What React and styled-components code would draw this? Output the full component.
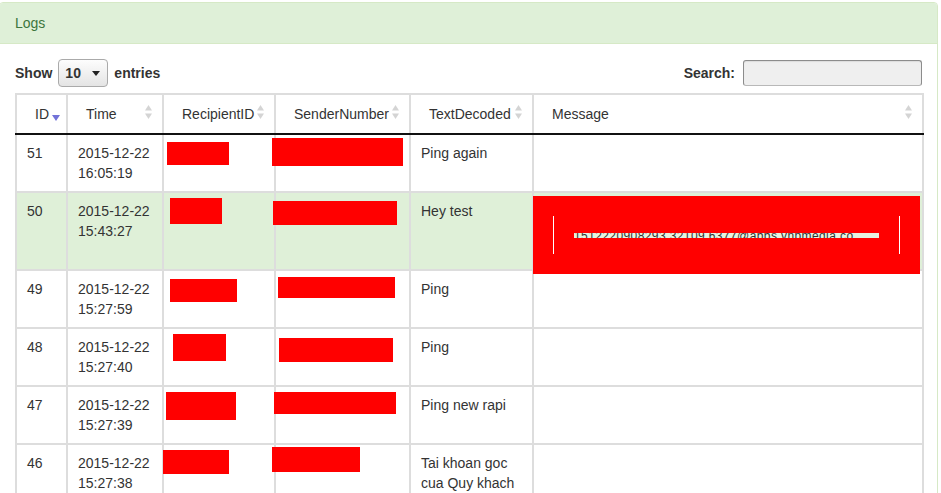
import styled, { createGlobalStyle } from 'styled-components'

const GlobalStyle = createGlobalStyle`
  body {
    margin: 0;
    background: #fff;
    font-family: "Liberation Sans", Helvetica, Arial, sans-serif;
    font-size: 14px;
    line-height: 20px;
    color: #333;
  }
`

const Panel = styled.div`
  margin: 2px 3px 0 -1px;
  border: 1px solid #d6e9c6;
  border-radius: 4px;
  background: #fff;
`
const Heading = styled.div`
  padding: 10px 15px;
  background: #dff0d8;
  color: #3c763d;
  border-bottom: 1px solid #d6e9c6;
  border-radius: 3px 3px 0 0;
`
const Body = styled.div`
  padding: 15px;
`
const Toolbar = styled.div`
  display: flex;
  justify-content: space-between;
  align-items: center;
  height: 28px;
  margin-bottom: 6px;
`
const Label = styled.label`
  display: flex;
  align-items: center;
  gap: 6px;
  font-weight: bold;
`
const FakeSelect = styled.span`
  display: inline-flex;
  align-items: center;
  justify-content: space-between;
  box-sizing: border-box;
  width: 50px;
  height: 28px;
  padding: 0 6px 0 6px;
  border: 1px solid #aaa;
  border-radius: 4px;
  background: linear-gradient(#fdfdfd, #e4e4e4);
  font-weight: bold;
`
const Caret = styled.span`
  width: 0;
  height: 0;
  border-left: 4px solid transparent;
  border-right: 4px solid transparent;
  border-top: 5px solid #222;
  margin-right: 1px;
`
const SearchInput = styled.input`
  box-sizing: border-box;
  width: 179px;
  height: 26px;
  margin-left: 2px;
  border: 1px solid #8c8c8c;
  border-bottom-color: #b8b8b8;
  border-radius: 3px;
  background: #efefef;
  box-shadow: inset 0 1px 1px rgba(0, 0, 0, 0.08);
`

const Table = styled.table`
  width: calc(100% + 2px);
  border-collapse: collapse;
  table-layout: fixed;
`
const Th = styled.th`
  border: 2px solid #ddd;
  border-bottom: 2px solid #111;
  padding: 9px 6px 9px 18px;
  font-weight: normal;
  text-align: left;
  white-space: nowrap;
`
const ThInner = styled.div`
  display: flex;
  align-items: center;
  justify-content: space-between;
`
const Tr = styled.tr`
  background: ${(p) => (p.$success ? '#dff0d8' : 'transparent')};
`
const Td = styled.td`
  border: 2px solid #ddd;
  padding: 8px 10px;
  vertical-align: top;
`
const Redact = styled.div`
  position: relative;
  background: #ff0000;
  width: ${(p) => p.$w}px;
  height: ${(p) => p.$h}px;
  margin-left: ${(p) => p.$x + 1}px;
  margin-top: ${(p) => p.$y}px;
`
const MessageBlock = styled.div`
  position: relative;
  display: flex;
  align-items: center;
  justify-content: space-between;
  height: 78px;
  box-sizing: border-box;
  margin: -5px -8px -13px -11px;
  padding: 20px 20px;
  background: #ff0000;
`
const WhiteLine = styled.div`
  width: 1px;
  height: 38px;
  background: #fff;
`
const Slit = styled.div`
  width: 305px;
  height: 5px;
  overflow: hidden;
  background: #e6f2e0;
  color: #333;
  font-size: 12px;
  line-height: 12px;
  white-space: nowrap;
  span {
    display: block;
    margin-top: -3px;
    letter-spacing: 0.4px;
  }
`

function SortBoth() {
  return (
    <svg width="7" height="14" viewBox="0 0 7 14" style={{ marginRight: 4, marginBottom: 4 }}>
      <polygon points="3.5,0 7,5.5 0,5.5" fill="#d4d4d4" />
      <polygon points="0,8.5 7,8.5 3.5,14" fill="#d4d4d4" />
    </svg>
  )
}

function SortDesc() {
  return (
    <svg width="8" height="6" viewBox="0 0 8 6" style={{ marginTop: 8 }}>
      <polygon points="0,0 8,0 4,6" fill="#7272d8" />
    </svg>
  )
}

const columns = [
  { title: 'ID', width: 51, desc: true },
  { title: 'Time', width: 96 },
  { title: 'RecipientID', width: 112 },
  { title: 'SenderNumber', width: 135 },
  { title: 'TextDecoded', width: 123 },
  { title: 'Message' },
]

const rows = [
  { id: 51, date: '2015-12-22', time: '16:05:19', r: [-8, -1, 62, 23], s: [-15, -5, 131, 28], text: 'Ping again' },
  { id: 50, date: '2015-12-22', time: '15:43:27', r: [-5, -3, 52, 26], s: [-14, 0, 124, 24], text: 'Hey test', success: true },
  { id: 49, date: '2015-12-22', time: '15:27:59', r: [-5, 0, 67, 23], s: [-9, -2, 117, 21], text: 'Ping' },
  { id: 48, date: '2015-12-22', time: '15:27:40', r: [-2, -3, 53, 27], s: [-8, 1, 114, 24], text: 'Ping' },
  { id: 47, date: '2015-12-22', time: '15:27:39', r: [-9, -3, 70, 28], s: [-13, -3, 122, 22], text: 'Ping new rapi' },
  { id: 46, date: '2015-12-22', time: '15:27:38', r: [-12, -3, 66, 24], s: [-15, -6, 88, 25], text: 'Tai khoan goc cua Quy khach' },
]

function Box({ v }) {
  return <Redact $x={v[0]} $y={v[1]} $w={v[2]} $h={v[3]} />
}

export default function App() {
  return (
    <>
      <GlobalStyle />
      <Panel>
        <Heading>Logs</Heading>
        <Body>
          <Toolbar>
            <Label>
              Show
              <FakeSelect>
                10
                <Caret />
              </FakeSelect>
              entries
            </Label>
            <Label>
              Search:
              <SearchInput type="text" />
            </Label>
          </Toolbar>
          <Table>
            <colgroup>
              {columns.map((c) => (
                <col key={c.title} style={c.width ? { width: c.width } : undefined} />
              ))}
            </colgroup>
            <thead>
              <tr>
                {columns.map((c) => (
                  <Th key={c.title}>
                    <ThInner>
                      {c.title}
                      {c.desc ? <SortDesc /> : <SortBoth />}
                    </ThInner>
                  </Th>
                ))}
              </tr>
            </thead>
            <tbody>
              {rows.map((row) => (
                <Tr key={row.id} $success={row.success}>
                  <Td>{row.id}</Td>
                  <Td>
                    {row.date}
                    <br />
                    {row.time}
                  </Td>
                  <Td>
                    <Box v={row.r} />
                  </Td>
                  <Td>
                    <Box v={row.s} />
                  </Td>
                  <Td>{row.text}</Td>
                  <Td>
                    {row.success && (
                      <MessageBlock>
                        <WhiteLine />
                        <Slit>
                          <span>1512220908293.32109.6377@abbs.vnpmedia.co</span>
                        </Slit>
                        <WhiteLine />
                      </MessageBlock>
                    )}
                  </Td>
                </Tr>
              ))}
            </tbody>
          </Table>
        </Body>
      </Panel>
    </>
  )
}
